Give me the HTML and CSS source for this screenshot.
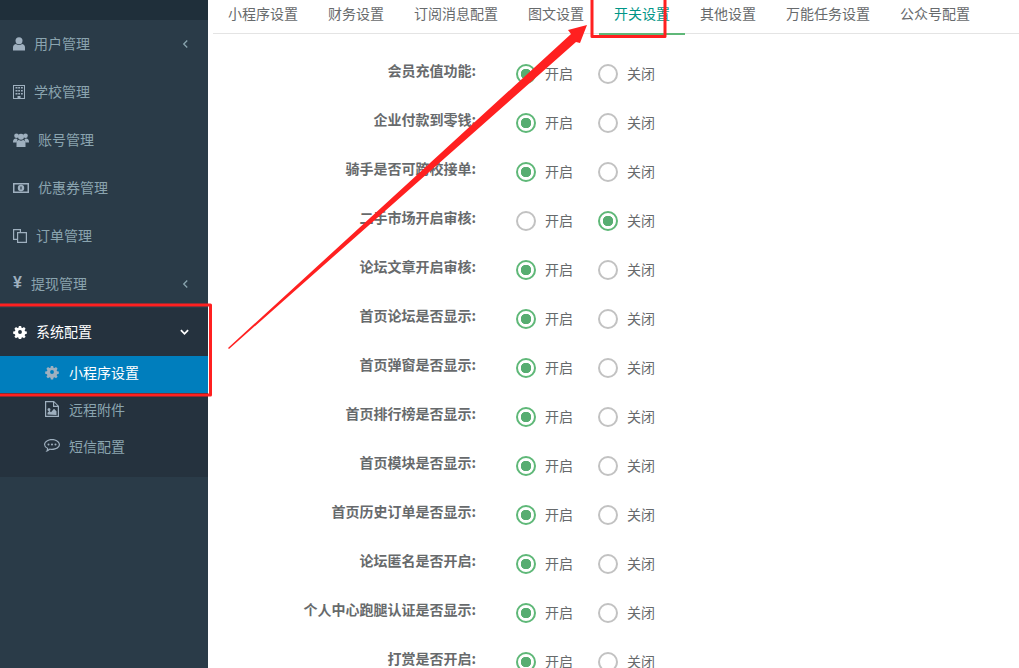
FILE: index.html
```html
<!DOCTYPE html>
<html lang="zh-CN">
<head>
<meta charset="utf-8">
<title>开关设置</title>
<link rel="stylesheet" href="styles.css">
</head>
<body>
<div class="page">
  <aside class="sidebar">
    <div class="brand"></div>
    <nav>
      <a class="item"><svg class="ic" viewBox="0 0 12 14"><circle cx="6" cy="3.700" r="3.500"/><path d="M0 13.500V10.500Q0 7.500 2.800 7Q6 9.200 9.200 7Q12 7.500 12 10.500V13.500Z"/></svg><span class="t t-a">用户管理</span><svg class="chev" viewBox="0 0 8 10"><path d="M6 1 2 5l4 4"/></svg></a>
      <a class="item"><svg class="ic" viewBox="0 0 12 14"><path fill-rule="evenodd" d="M0 0h12v14H0zM1 1v12h3.500v-2h3v2H11V1zM2.500 2h2v1.500h-2zM5.200 2h1.800v1.500H5.200zM8 2h1.800v1.500H8zM2.500 5h2v1.500h-2zM5.200 5h1.800v1.500H5.200zM8 5h1.800v1.500H8zM2.500 8h2v1.500h-2zM5.200 8h1.800v1.500H5.200zM8 8h1.800v1.500H8z"/></svg><span class="t t-a">学校管理</span></a>
      <a class="item"><svg class="ic ic-w" viewBox="0 0 16 14"><circle cx="3.500" cy="2.800" r="2.300"/><circle cx="12.500" cy="2.800" r="2.300"/><circle cx="8" cy="3.800" r="3"/><path d="M0 9q0-3.500 3-3.500l1.500.500-1 3.500H0zM16 9q0-3.500-3-3.500l-1.500.500 1 3.500H16zM3.500 14v-3.500q0-3.500 2.500-3.500 2 1.500 4 0 2.500 0 2.500 3.500V14z"/></svg><span class="t t-b">账号管理</span></a>
      <a class="item"><svg class="ic ic-w" viewBox="0 0 16 14"><path fill-rule="evenodd" d="M0 2h16v10H0zM1.500 3.500v7h13v-7zM8 3.800a3.200 3.200 0 1 1 0 6.400 3.200 3.200 0 0 1 0-6.400zM7.400 5.500v3h1.200v-3z"/></svg><span class="t t-b">优惠券管理</span></a>
      <a class="item"><svg class="ic ic-c" viewBox="0 0 14 14"><path fill-rule="evenodd" d="M0 0h8v3h6v11H4v-3H0zM1.200 1.200v8.600H4V3h2.800V1.200zM5.200 4.200v8.600h7.600V4.200z"/></svg><span class="t t-c">订单管理</span></a>
      <a class="item"><span class="yen">¥</span><span class="t t-y">提现管理</span><svg class="chev" viewBox="0 0 8 10"><path d="M6 1 2 5l4 4"/></svg></a>
      <div class="open">
        <a class="item item-open"><svg class="ic" viewBox="-1 -1 16 16"><path d="M5.700 0h2.600l.4 2 1.200.5 1.700-1.100 1.800 1.800-1.100 1.700.5 1.200 2 .4v2.600l-2 .4-.5 1.200 1.100 1.700-1.800 1.800-1.700-1.100-1.200.5-.4 2H5.700l-.4-2-1.200-.5-1.700 1.100L.6 12.400l1.100-1.700-.5-1.200-2-.4V6.500l2-.4.5-1.200L.6 3.200l1.800-1.800 1.700 1.100 1.200-.5zM7 4.800a2.200 2.200 0 1 0 0 4.400 2.200 2.200 0 0 0 0-4.400z" fill-rule="evenodd"/></svg><span class="t t-o">系统配置</span><svg class="chev chev-d" viewBox="0 0 10 8"><path d="M1 2l4 4 4-4"/></svg></a>
        <a class="sub active"><svg class="sic" viewBox="-1 -1 16 16"><path d="M5.700 0h2.600l.4 2 1.200.5 1.700-1.100 1.800 1.800-1.100 1.700.5 1.200 2 .4v2.600l-2 .4-.5 1.200 1.100 1.700-1.800 1.800-1.700-1.100-1.200.5-.4 2H5.700l-.4-2-1.200-.5-1.700 1.100L.6 12.400l1.100-1.700-.5-1.200-2-.4V6.500l2-.4.5-1.200L.6 3.200l1.800-1.800 1.700 1.100 1.200-.5zM7 4.800a2.200 2.200 0 1 0 0 4.400 2.200 2.200 0 0 0 0-4.400z" fill-rule="evenodd"/></svg><span>小程序设置</span></a>
        <a class="sub"><svg class="sic" viewBox="0 0 14 16"><path fill-rule="evenodd" d="M0 0h9l5 5v11H0zM1.200 1.200v13.600h11.600V6H8V1.200zM9.200 1.600V4.800h3.200zM4 7a1.500 1.500 0 1 1 0 3 1.500 1.500 0 0 1 0-3zM2.500 13.600v-1.800l2-2 1.500 1.500 3-3.500 2.500 2.500v3.800z"/></svg><span>远程附件</span></a>
        <a class="sub"><svg class="sic sic-w" viewBox="0 0 16 14"><path fill-rule="evenodd" d="M8 0c4.400 0 8 2.500 8 5.500S12.400 11 8 11q-1 0-2-.2Q4 12.800 1.500 13 3 11.500 3 9.500 0 8 0 5.500C0 2.500 3.600 0 8 0zm0 1.200C4.300 1.200 1.200 3.100 1.200 5.500c0 1.700 1.500 2.900 3 3.500 0 .6-.1 1-.3 1.500q1.100-.5 1.900-1 1 .2 2.200.2c3.700 0 6.800-1.900 6.800-4.200S11.700 1.200 8 1.200zM4.500 4.500a1 1 0 1 1 0 2 1 1 0 0 1 0-2zm3.500 0a1 1 0 1 1 0 2 1 1 0 0 1 0-2zm3.500 0a1 1 0 1 1 0 2 1 1 0 0 1 0-2z"/></svg><span>短信配置</span></a>
      </div>
    </nav>
  </aside>
  <main class="main">
    <div class="tabs">
      <a class="tab">小程序设置</a>
      <a class="tab">财务设置</a>
      <a class="tab">订阅消息配置</a>
      <a class="tab">图文设置</a>
      <a class="tab tab-on">开关设置</a>
      <a class="tab">其他设置</a>
      <a class="tab">万能任务设置</a>
      <a class="tab">公众号配置</a>
    </div>
    <form class="form">
      <div class="row"><label class="lab">会员充值功能:</label><span class="opt"><i class="radio on"></i>开启</span><span class="opt"><i class="radio"></i>关闭</span></div>
      <div class="row"><label class="lab">企业付款到零钱:</label><span class="opt"><i class="radio on"></i>开启</span><span class="opt"><i class="radio"></i>关闭</span></div>
      <div class="row"><label class="lab">骑手是否可跨校接单:</label><span class="opt"><i class="radio on"></i>开启</span><span class="opt"><i class="radio"></i>关闭</span></div>
      <div class="row"><label class="lab">二手市场开启审核:</label><span class="opt"><i class="radio"></i>开启</span><span class="opt"><i class="radio on"></i>关闭</span></div>
      <div class="row"><label class="lab">论坛文章开启审核:</label><span class="opt"><i class="radio on"></i>开启</span><span class="opt"><i class="radio"></i>关闭</span></div>
      <div class="row"><label class="lab">首页论坛是否显示:</label><span class="opt"><i class="radio on"></i>开启</span><span class="opt"><i class="radio"></i>关闭</span></div>
      <div class="row"><label class="lab">首页弹窗是否显示:</label><span class="opt"><i class="radio on"></i>开启</span><span class="opt"><i class="radio"></i>关闭</span></div>
      <div class="row"><label class="lab">首页排行榜是否显示:</label><span class="opt"><i class="radio on"></i>开启</span><span class="opt"><i class="radio"></i>关闭</span></div>
      <div class="row"><label class="lab">首页模块是否显示:</label><span class="opt"><i class="radio on"></i>开启</span><span class="opt"><i class="radio"></i>关闭</span></div>
      <div class="row"><label class="lab">首页历史订单是否显示:</label><span class="opt"><i class="radio on"></i>开启</span><span class="opt"><i class="radio"></i>关闭</span></div>
      <div class="row"><label class="lab">论坛匿名是否开启:</label><span class="opt"><i class="radio on"></i>开启</span><span class="opt"><i class="radio"></i>关闭</span></div>
      <div class="row"><label class="lab">个人中心跑腿认证是否显示:</label><span class="opt"><i class="radio on"></i>开启</span><span class="opt"><i class="radio"></i>关闭</span></div>
      <div class="row"><label class="lab">打赏是否开启:</label><span class="opt"><i class="radio on"></i>开启</span><span class="opt"><i class="radio"></i>关闭</span></div>
    </form>
  </main>
  <svg class="marks" viewBox="0 0 1019 668" width="1019" height="668">
    <polygon class="mark-fill" points="228,348 571,34 568,30 587,25 580,43 576,42 229,349"/>
    <path class="mark-line" d="M-3 305H210.500V395H-3"/>
    <path class="mark-line" d="M592 -3V36.500H665V-3"/>
  </svg>
</div>
</body>
</html>
```

FILE: styles.css
```css
* { box-sizing: border-box; }
html, body { margin: 0; padding: 0; height: 100%; overflow: hidden; background: #fff; }
body { font-family: "Noto Sans CJK SC", "Liberation Sans", sans-serif; font-size: 14px; color: #676a6c; }
.page { position: relative; display: flex; width: 1019px; height: 668px; overflow: hidden; }

.sidebar { width: 208px; flex: none; background: #2a3b48; color: #8aa4af; }
.brand { height: 20px; background: #1f2f3a; }
.item { display: flex; align-items: center; height: 48px; padding: 0 19px 0 13px; color: #8aa4af; }
.ic { width: 12px; height: 14px; flex: none; fill: #9fb0bf; margin-top: -1px; }
.ic-w { width: 16px; }
.ic-c { width: 14px; }
.yen { width: 9px; font-family: "Liberation Sans", sans-serif; font-weight: 700; font-size: 16px; color: #9fb0bf; flex: none; line-height: 16px; margin-top: -2px; }
.t { flex: 1; line-height: 20px; margin-top: -2px; }
.t-a { margin-left: 9px; }
.t-b { margin-left: 9px; }
.t-c { margin-left: 9px; }
.t-y { margin-left: 9px; }
.t-o { margin-left: 9px; color: #fff; }
.chev { width: 7px; height: 10px; flex: none; fill: none; stroke: #8aa4af; stroke-width: 1.500; }
.chev-d { width: 9px; height: 8px; stroke: #fff; stroke-width: 2; }
.open { background: #25323e; height: 169px; }
.item-open .ic { fill: #fff; width: 14px; }
.sub { display: flex; align-items: center; height: 37px; padding-left: 45px; color: #8aa4af; font-size: 14px; line-height: 20px; }
.sub span { margin-left: 10px; margin-top: -6px; }
.sub.active { background: #007ebd; color: #fff; }
.sic { width: 14px; height: 16px; flex: none; fill: #9fb0bf; margin-top: -6px; }
.sic-w { width: 16px; height: 14px; margin-left: -1px; }
.sub .sic-w + span { margin-left: 9px; }

.main { flex: 1; min-width: 0; padding-left: 5px; }
.tabs { display: flex; height: 34px; border-bottom: 1px solid #e4e4e4; }
.tab { height: 35px; padding: 3px 15px 0; line-height: 20px; color: #676a6c; white-space: nowrap; }
.tab-on { color: #009688; border-bottom: 2px solid #5fb878; }

.form { padding-top: 15px; }
.row { display: flex; align-items: center; height: 49px; }
.lab { width: 265px; padding-right: 2px; text-align: right; font-size: 14px; font-weight: 700; color: #676a6c; line-height: 20px; margin-top: -7px; white-space: nowrap; }
.opt { display: flex; align-items: center; width: 82px; color: #676a6c; line-height: 20px; margin-top: -2px; }
.lab + .opt { margin-left: 38px; }
.radio { width: 20px; height: 20px; flex: none; margin: 2px 9px 0 0; border: 2px solid #c2c2c2; border-radius: 50%; background: #fff; }
.radio.on { border-color: #5fb878; background: radial-gradient(circle, #57ad71 0 5px, #fff 5.500px); }

.marks { position: absolute; left: 0; top: 0; pointer-events: none; }
.mark-fill { fill: #ff2020; }
.mark-line { fill: none; stroke: #ff2020; stroke-width: 3; stroke-linejoin: round; }
```
